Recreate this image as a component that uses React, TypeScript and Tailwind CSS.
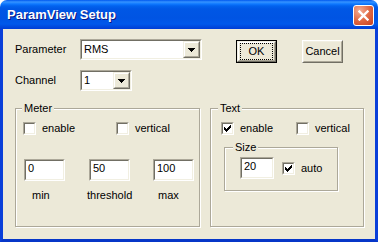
import React from 'react';

type BoxProps = { className?: string; children?: React.ReactNode };

// classic 3D sunken border (edit boxes, combo boxes, check boxes)
const Sunken: React.FC<BoxProps> = ({ className = '', children }) => (
  <div className={`border border-t-[#aca899] border-l-[#aca899] border-b-white border-r-white ${className}`}>
    <div className="flex h-full border border-t-[#716f64] border-l-[#716f64] border-b-[#f1efe2] border-r-[#f1efe2] bg-white">
      {children}
    </div>
  </div>
);

// classic 3D raised border (buttons)
const Raised: React.FC<BoxProps> = ({ className = '', children }) => (
  <div className={`border border-t-[#f1efe2] border-l-[#f1efe2] border-b-[#716f64] border-r-[#716f64] ${className}`}>
    <div className="flex h-full items-center justify-center border border-t-white border-l-white border-b-[#aca899] border-r-[#aca899] bg-[#ece9d8]">
      {children}
    </div>
  </div>
);

const Combo: React.FC<{ value: string; width: string }> = ({ value, width }) => (
  <Sunken className={`${width} h-[21px]`}>
    <div className="flex-1 self-center pl-[2px]">{value}</div>
    <Raised className="h-full w-[17px]">
      <svg width="7" height="4" viewBox="0 0 7 4" shapeRendering="crispEdges">
        <path d="M0 0h7v1h-7z M1 1h5v1h-5z M2 2h3v1h-3z M3 3h1v1h-1z" fill="#000" />
      </svg>
    </Raised>
  </Sunken>
);

const Edit: React.FC<{ value: string; width: string }> = ({ value, width }) => (
  <Sunken className={`${width} h-[22px]`}>
    <div className="pl-[2px] pt-[1px]">{value}</div>
  </Sunken>
);

const CheckBox: React.FC<{ checked?: boolean; label: string; className?: string }> = ({ checked, label, className = '' }) => (
  <div className={`flex items-center ${className}`}>
    <Sunken className="h-[13px] w-[13px]">
      {checked && (
        <svg width="7" height="7" viewBox="0 0 7 7" shapeRendering="crispEdges" className="ml-px mt-px">
          <path
            d="M6 0h1v1h-1z M5 1h2v1h-2z M0 2h1v1h-1z M4 2h3v1h-3z M0 3h2v1h-2z M3 3h3v1h-3z M0 4h5v1h-5z M1 5h3v1h-3z M2 6h1v1h-1z"
            fill="#000"
          />
        </svg>
      )}
    </Sunken>
    <span className="ml-[6px]">{label}</span>
  </div>
);

const GroupBox: React.FC<{ title: string; className?: string; labelLeft?: string; children?: React.ReactNode }> = ({
  title,
  className = '',
  labelLeft = 'left-[6px]',
  children,
}) => (
  <div className={`relative border border-[#aca899] shadow-[inset_1px_1px_0_#fff,1px_1px_0_#fff] ${className}`}>
    <span className={`absolute -top-[7px] ${labelLeft} bg-[#ece9d8] px-[2px]`}>{title}</span>
    {children}
  </div>
);

const Button: React.FC<{ label: string; isDefault?: boolean }> = ({ label, isDefault }) =>
  isDefault ? (
    <div className="h-[23px] w-[41px] border border-black">
      <Raised className="h-full w-full">
        <span className="flex h-[15px] w-[31px] items-center justify-center outline outline-1 outline-dotted outline-black">
          {label}
        </span>
      </Raised>
    </div>
  ) : (
    <div className="h-[23px] w-[41px] border border-t-white border-l-white border-b-[#716f64] border-r-[#716f64]">
      <div className="flex h-full items-center justify-center border border-t-[#f1efe2] border-l-[#f1efe2] border-b-[#aca899] border-r-[#aca899]">
        {label}
      </div>
    </div>
  );

export default function App() {
  return (
    <div className="flex h-[242px] w-[378px] flex-col bg-white font-['Liberation_Sans',Arial,sans-serif] text-[11px] leading-[13px] text-black">
      {/* title bar */}
      <div className="flex h-[29px] items-start justify-between rounded-t-[7px] bg-[linear-gradient(180deg,#0058ee_0px,#3593ff_2px,#0e78ff_4px,#0262ee_6px,#0057e5_9px,#0054e3_18px,#0058eb_24px,#0048dc_27px,#003dd7_29px)] pl-[7px] pr-[4px]">
        <span className="pt-[7px] text-[13px] font-bold leading-[16px] text-white [text-shadow:1px_1px_0_#0a1883]">
          ParamView Setup
        </span>
        <div className="mt-[5px] flex h-[21px] w-[21px] items-center justify-center rounded-[3px] border border-white bg-[radial-gradient(circle_at_30%_25%,#f4ad94,#e06a45_50%,#c8401f)]">
          <svg width="11" height="11" viewBox="0 0 11 11">
            <path d="M1.5 1.5l8 8M9.5 1.5l-8 8" stroke="#fff" strokeWidth="2.4" strokeLinecap="square" />
          </svg>
        </div>
      </div>

      {/* body */}
      <div className="flex-1 border-x-[3px] border-b-[3px] border-x-[#0a3fd9] border-b-[#0636c8] bg-[#ece9d8]">
        <div className="flex pl-[12px] pt-[10px]">
          <div className="flex flex-col gap-[10px]">
            <div className="flex items-center">
              <span className="w-[65px]">Parameter</span>
              <Combo value="RMS" width="w-[122px]" />
            </div>
            <div className="flex items-center">
              <span className="w-[65px]">Channel</span>
              <Combo value="1" width="w-[52px]" />
            </div>
          </div>
          <div className="ml-[34px] mt-px flex gap-[25px]">
            <Button label="OK" isDefault />
            <Button label="Cancel" />
          </div>
        </div>

        <div className="mt-[17px] flex gap-[10px] pl-[12px]">
          <GroupBox title="Meter" className="h-[119px] w-[185px] pl-[7px] pt-[13px]">
            <div className="flex">
              <CheckBox label="enable" className="w-[93px]" />
              <CheckBox label="vertical" />
            </div>
            <div className="ml-px mt-[24px] flex">
              <div className="flex w-[65px] flex-col">
                <Edit value="0" width="w-[41px]" />
                <span className="mt-[8px] pl-[8px]">min</span>
              </div>
              <div className="flex w-[64px] flex-col">
                <Edit value="50" width="w-[41px]" />
                <span className="mt-[8px] -ml-[2px]">threshold</span>
              </div>
              <div className="flex flex-col">
                <Edit value="100" width="w-[41px]" />
                <span className="mt-[8px] pl-[5px]">max</span>
              </div>
            </div>
          </GroupBox>

          <GroupBox title="Text" labelLeft="left-[7px]" className="h-[119px] w-[154px] pl-[10px] pt-[13px]">
            <div className="flex">
              <CheckBox checked label="enable" className="w-[75px]" />
              <CheckBox label="vertical" />
            </div>
            <GroupBox title="Size" labelLeft="left-[8px]" className="ml-[3px] mt-[12px] flex h-[44px] w-[114px] items-start pl-[15px] pt-[9px]">
              <Edit value="20" width="w-[34px]" />
              <CheckBox checked label="auto" className="ml-[8px] mt-[5px]" />
            </GroupBox>
          </GroupBox>
        </div>
      </div>
    </div>
  );
}
